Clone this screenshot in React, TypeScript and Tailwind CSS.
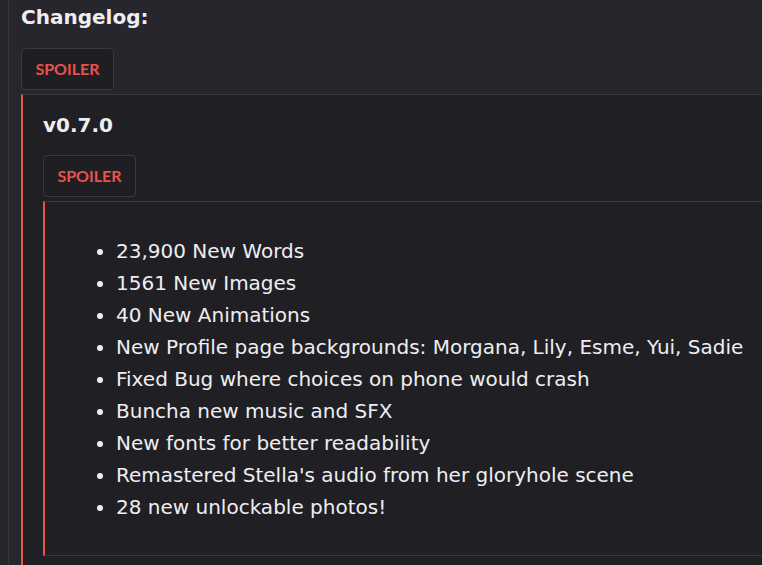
const items = [
  '23,900 New Words',
  '1561 New Images',
  '40 New Animations',
  'New Profile page backgrounds: Morgana, Lily, Esme, Yui, Sadie',
  'Fixed Bug where choices on phone would crash',
  'Buncha new music and SFX',
  'New fonts for better readability',
  "Remastered Stella's audio from her gloryhole scene",
  '28 new unlockable photos!',
]

const SpoilerButton = () => (
  <button className="h-[42px] w-[93px] rounded-[4px] border border-[#3a3940] bg-[#1f1e23] text-[16px] font-bold text-[#e8524a] [font-family:Lato,'Open_Sans',sans-serif]">
    SPOILER
  </button>
)

export default function App() {
  return (
    <div className="h-[565px] w-[762px] overflow-hidden bg-[#27262c] text-[#eeeef2] [font-family:'DejaVu_Sans',Verdana,sans-serif]">
      <div className="ml-2 h-full w-[820px] border-l border-[#39383e] pl-3">
        <h2 className="pt-[5px] text-[20px] leading-[24px] font-bold">Changelog:</h2>
        <div className="mt-[19px]">
          <SpoilerButton />
        </div>
        <div className="mt-[4px] h-[600px] border-t border-l-2 border-t-[#3a3940] border-l-[#e8524a] bg-[#202024] pl-5">
          <h3 className="pt-[17px] text-[20px] leading-[26px] font-bold">v0.7.0</h3>
          <div className="mt-[17px]">
            <SpoilerButton />
          </div>
          <div className="mt-[4px] border-t border-b border-l-2 border-t-[#3a3940] border-b-[#3a3940] border-l-[#e8524a] pt-[33px] pb-[32px]">
            <ul className="list-disc pl-[71px] text-[20px] leading-[32px] marker:text-[#eeeef2]">
              {items.map((t, i) => (
                <li key={i}>{t}</li>
              ))}
            </ul>
          </div>
        </div>
      </div>
    </div>
  )
}
